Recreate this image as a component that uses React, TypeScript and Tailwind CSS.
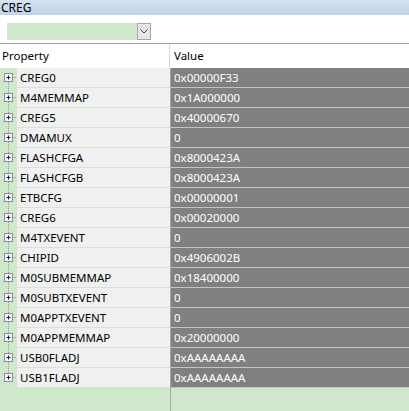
import React from "react";

const rows: [string, string][] = [
  ["CREG0", "0x00000F33"],
  ["M4MEMMAP", "0x1A000000"],
  ["CREG5", "0x40000670"],
  ["DMAMUX", "0"],
  ["FLASHCFGA", "0x8000423A"],
  ["FLASHCFGB", "0x8000423A"],
  ["ETBCFG", "0x00000001"],
  ["CREG6", "0x00020000"],
  ["M4TXEVENT", "0"],
  ["CHIPID", "0x4906002B"],
  ["M0SUBMEMMAP", "0x18400000"],
  ["M0SUBTXEVENT", "0"],
  ["M0APPTXEVENT", "0"],
  ["M0APPMEMMAP", "0x20000000"],
  ["USB0FLADJ", "0xAAAAAAAA"],
  ["USB1FLADJ", "0xAAAAAAAA"],
];

function TreeIcon({ first, last }: { first: boolean; last: boolean }) {
  return (
    <svg width="20" height="20" viewBox="0 0 20 20" className="block" style={{ overflow: "visible" }}>
      <line x1="8.5" y1={first ? 10 : 0} x2="8.5" y2={last ? 10 : 20} stroke="#9a9a9a" strokeDasharray="1 1" />
      <line x1="13" y1="9.5" x2="20" y2="9.5" stroke="#9a9a9a" strokeDasharray="1 1" />
      <rect x="4.5" y="5.5" width="8" height="8" fill="#f4f4f4" stroke="#8a8f9a" />
      <line x1="6.5" y1="9.5" x2="10.5" y2="9.5" stroke="#1a1a60" />
      <line x1="8.5" y1="7.5" x2="8.5" y2="11.5" stroke="#1a1a60" />
    </svg>
  );
}

export default function App() {
  return (
    <div
      className="w-[409px] h-[411px] overflow-hidden flex flex-col bg-white text-[11.5px] text-black"
      style={{ fontFamily: '"Noto Sans", "Open Sans", sans-serif' }}
    >
      <div className="h-[15px] bg-gradient-to-b from-[#d6e3f0] to-[#bfd2e6] flex items-center px-[1px] leading-none text-[12px]">
        CREG
      </div>
      <div className="h-[28px] flex items-start pt-[8px] pl-[7px]">
        <div className="flex h-[17px]">
          <div className="w-[130px] bg-[#cfe8cc]" />
          <div className="w-[14px] bg-[#e6e6e6] border border-[#a8a8a8] flex items-center justify-center">
            <svg width="8" height="5" viewBox="0 0 8 5">
              <polyline points="0.5,0.5 4,4 7.5,0.5" fill="none" stroke="#404040" strokeWidth="1" />
            </svg>
          </div>
        </div>
      </div>
      <div className="h-px bg-[#a0a0a0]" />
      <div className="h-[24px] flex items-center">
        <div className="w-[170px] pl-[2px] border-r border-[#d8d8d8] h-full flex items-center">Property</div>
        <div className="pl-[4px]">Value</div>
      </div>
      <div className="flex-1 flex flex-col bg-[#cfe8cc]">
        {rows.map(([name, value], i) => (
          <div key={name} className="h-[20px] flex">
            <div className="w-[17px] h-full shrink-0">
              <TreeIcon first={i === 0} last={i === rows.length - 1} />
            </div>
            <div className="w-[153px] h-full bg-[#f0f0f0] border-b border-[#d4e6d1] flex items-center pl-[3px] leading-none">
              {name}
            </div>
            <div className="w-px h-full bg-[#a8a8a8]" />
            <div className="flex-1 h-full bg-[#808080] border-b border-[#c4c4c4] text-white flex items-center pl-[3px] leading-none">
              {value}
            </div>
          </div>
        ))}
        <div className="flex-1 flex">
          <div className="w-[170px]" />
          <div className="w-px bg-[#a8a8a8]" />
        </div>
      </div>
    </div>
  );
}
